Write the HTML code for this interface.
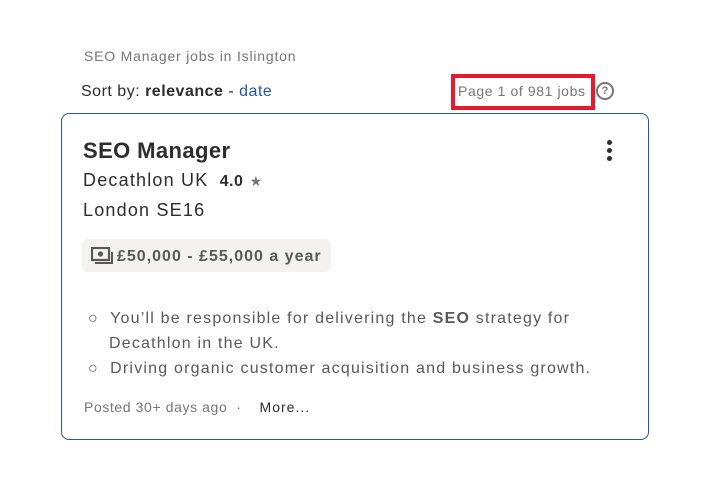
<!DOCTYPE html>
<html><head><style>
body{margin:0;width:727px;height:492px;background:#fff;font-family:"Liberation Sans",sans-serif;position:relative;color:#2d2d2d}
.a{position:absolute;white-space:nowrap}
</style></head><body>
<div class="a" style="left:84px;top:48px;font-size:14px;color:#767676;letter-spacing:0.8px">SEO Manager jobs in Islington</div>
<div class="a" style="left:81px;top:83px;font-size:16px;letter-spacing:0.5px">Sort by: <b>relevance</b> - <span style="color:#2557a7">date</span></div>
<div class="a" style="left:451px;top:74px;width:136px;height:28px;border:4px solid #e8192c;box-sizing:content-box;"></div>
<div class="a" style="left:458px;top:83px;font-size:14px;color:#767676;letter-spacing:0.6px">Page 1 of 981 jobs</div>
<div class="a" style="left:596px;top:82px;width:14px;height:14px;border:2px solid #767676;border-radius:50%;font-size:11px;font-weight:bold;color:#767676;text-align:center;line-height:14px">?</div>
<div class="a" style="left:61px;top:113px;width:586px;height:325px;border:1px solid #2557a7;border-radius:8px"></div>
<div class="a" style="left:83px;top:138px;font-size:22px;font-weight:bold;letter-spacing:0.4px">SEO Manager</div>
<div class="a" style="left:607px;top:140px;width:5px;height:5px;border-radius:50%;background:#2d2d2d;box-shadow:0 8px 0 #2d2d2d,0 16px 0 #2d2d2d"></div>
<div class="a" style="left:83px;top:170px;font-size:18px;letter-spacing:1.2px">Decathlon UK <b style="font-size:16px;letter-spacing:0.5px">&nbsp;4.0</b> <span style="color:#767676;font-size:14px">★</span></div>
<div class="a" style="left:83px;top:200px;font-size:18px;letter-spacing:1.2px">London SE16</div>
<div class="a" style="left:82px;top:239px;width:249px;height:33px;background:#f3f2f1;border-radius:6px"></div>
<svg class="a" style="left:91px;top:247px" width="22" height="18" viewBox="0 0 22 18"><rect x="1" y="1" width="17" height="12" fill="none" stroke="#595959" stroke-width="2.2"/><circle cx="9.5" cy="7" r="2.6" fill="#595959"/><path d="M4 16H21V5" fill="none" stroke="#595959" stroke-width="2"/></svg>
<div class="a" style="left:117px;top:248px;font-size:16px;font-weight:bold;color:#595959;letter-spacing:1px">£50,000 - £55,000 a year</div>
<div class="a" style="left:88px;top:306px;font-size:16px;color:#595959;line-height:25px;letter-spacing:1.2px">
<div>○&nbsp;&nbsp;You’ll be responsible for delivering the <b>SEO</b> strategy for</div>
<div style="padding-left:21px">Decathlon in the UK.</div>
<div>○&nbsp;&nbsp;Driving organic customer acquisition and business growth.</div></div>
<div class="a" style="left:84px;top:399px;font-size:14px;color:#767676;letter-spacing:0.6px">Posted 30+ days ago &nbsp;· &nbsp;&nbsp;&nbsp;<span style="color:#2d2d2d;letter-spacing:1px">More...</span></div>
</body></html>
